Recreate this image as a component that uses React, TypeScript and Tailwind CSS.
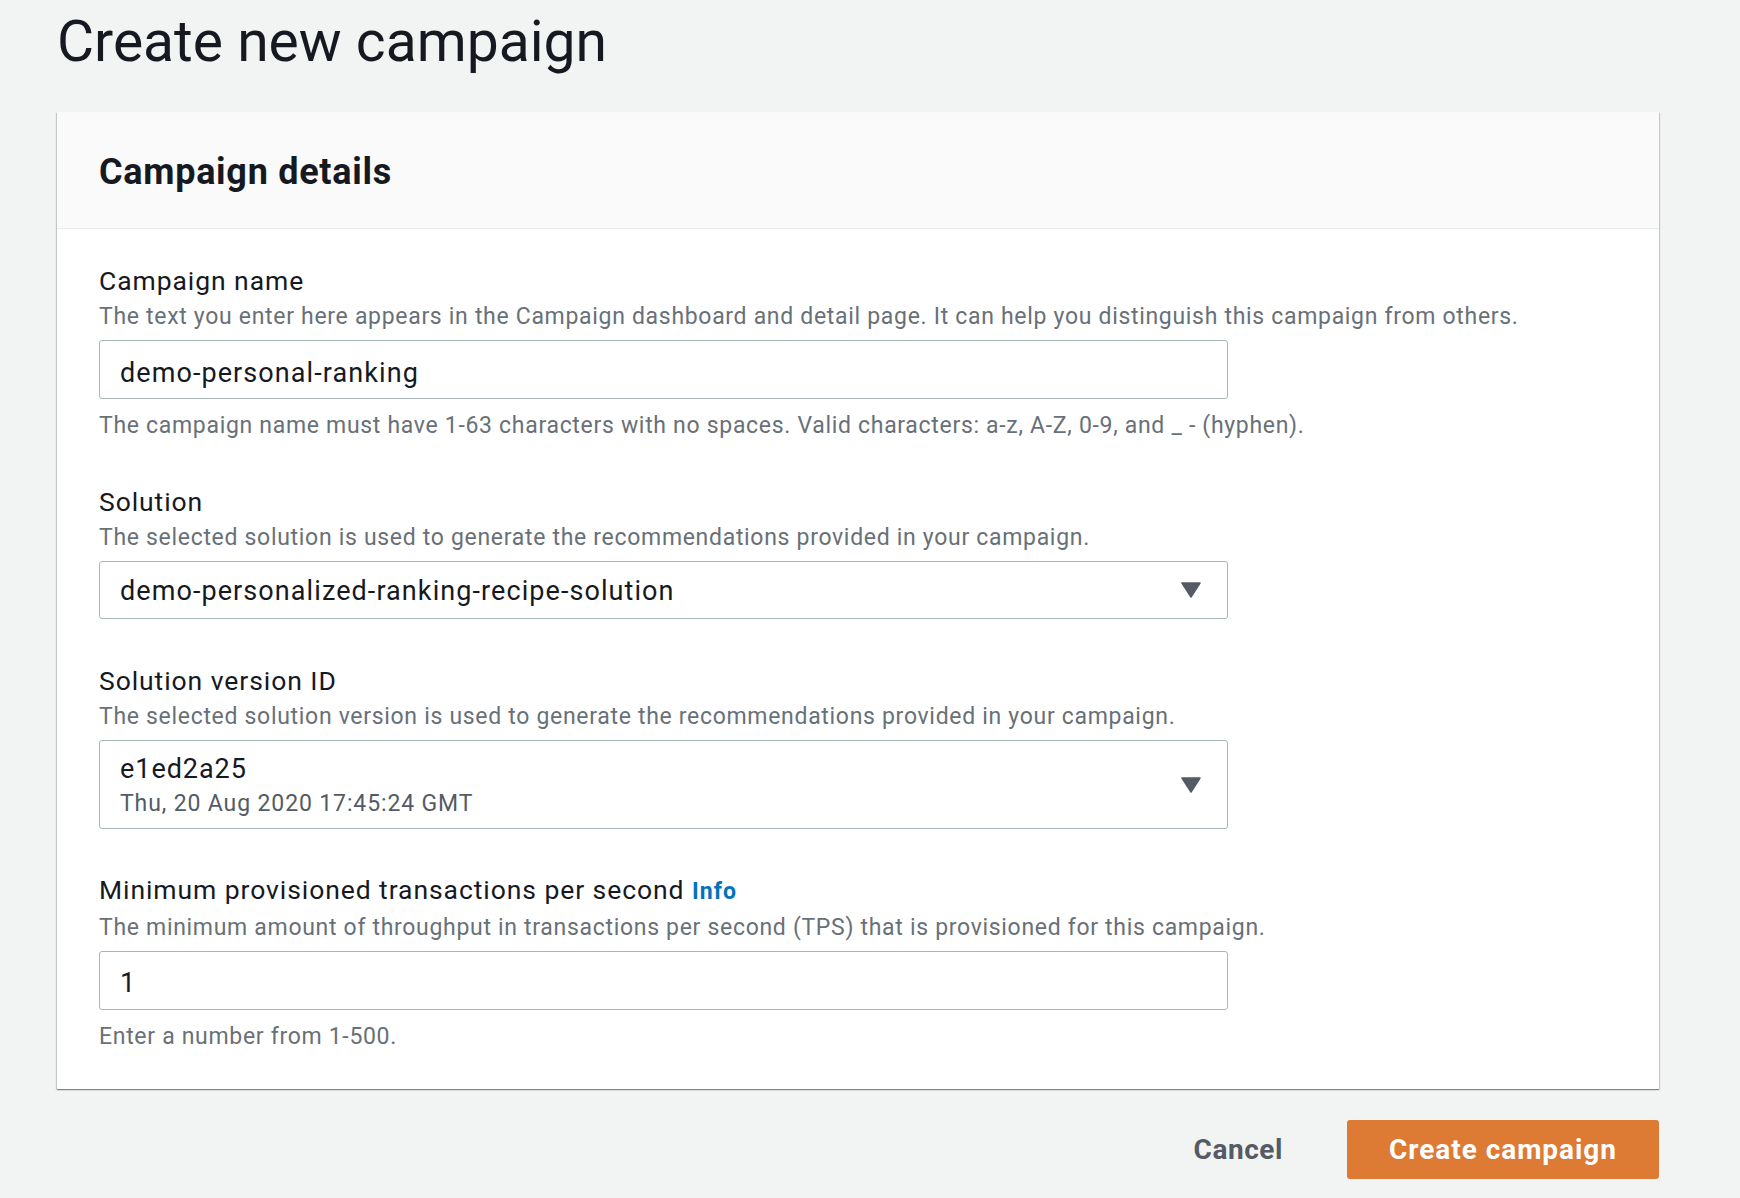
import React from 'react';

const font = { fontFamily: 'Roboto, "Open Sans", sans-serif' };

const Caret = () => (
  <svg width="20" height="16" viewBox="0 0 20 16" aria-hidden="true">
    <path d="M1 1h18l-9 14z" fill="#545b64" stroke="#545b64" strokeWidth="1.5" strokeLinejoin="round" />
  </svg>
);

interface FieldProps {
  label: React.ReactNode;
  description: string;
  hint?: string;
  children: React.ReactNode;
  className?: string;
}

const Field: React.FC<FieldProps> = ({ label, description, hint, children, className }) => (
  <div className={className}>
    <div className="text-[26.5px] leading-[32px] tracking-[0.035em] text-[#16191f]">{label}</div>
    <div className="mt-[5px] text-[23px] leading-[30px] tracking-[0.03em] text-[#687078]">{description}</div>
    <div className="mt-[8px] w-[1129px]">{children}</div>
    {hint && <div className="mt-[12px] text-[23px] leading-[30px] tracking-[0.03em] text-[#687078]">{hint}</div>}
  </div>
);

export default function App() {
  return (
    <div className="min-h-screen bg-[#f2f3f3] px-[57px]" style={font}>
      <h1 className="pt-[10px] text-[57px] leading-[64px] font-normal text-[#16191f]">Create new campaign</h1>

      <div className="mt-[38px] w-[1602px] bg-white shadow-[0_1px_1px_0_rgba(0,28,36,0.3),1px_1px_1px_0_rgba(0,28,36,0.15),-1px_1px_1px_0_rgba(0,28,36,0.15)]">
        <div className="bg-[#fafafa] border-b border-[#eaeded] px-[42px] pt-[38px] pb-[34px]">
          <h2 className="text-[36px] leading-[44px] tracking-[0.02em] font-bold text-[#16191f]">Campaign details</h2>
        </div>

        <div className="px-[42px] pt-[36px] pb-[37px]">
          <Field
            label="Campaign name"
            description="The text you enter here appears in the Campaign dashboard and detail page. It can help you distinguish this campaign from others."
            hint="The campaign name must have 1-63 characters with no spaces. Valid characters: a-z, A-Z, 0-9, and _ - (hyphen)."
          >
            <div className="h-[59px] rounded-[3px] border border-[#aab7b8] bg-white px-[20px] pt-[8px] flex items-center text-[27px] tracking-[0.04em] text-[#16191f]">
              demo-personal-ranking
            </div>
          </Field>

          <Field
            className="mt-[45px]"
            label="Solution"
            description="The selected solution is used to generate the recommendations provided in your campaign."
          >
            <div className="h-[58px] rounded-[3px] border border-[#aab7b8] bg-white pl-[20px] pr-[26px] flex items-center justify-between text-[27px] tracking-[0.04em] text-[#16191f]">
              <span className="pt-[3px]">demo-personalized-ranking-recipe-solution</span>
              <Caret />
            </div>
          </Field>

          <Field
            className="mt-[46px]"
            label="Solution version ID"
            description="The selected solution version is used to generate the recommendations provided in your campaign."
          >
            <div className="h-[89px] rounded-[3px] border border-[#aab7b8] bg-white pl-[20px] pr-[26px] flex items-center justify-between">
              <div className="flex flex-col pt-[4px]">
                <span className="text-[27px] leading-[34px] tracking-[0.035em] text-[#16191f]">e1ed2a25</span>
                <span className="text-[23px] leading-[36px] tracking-[0.038em] text-[#545b64]">Thu, 20 Aug 2020 17:45:24 GMT</span>
              </div>
              <Caret />
            </div>
          </Field>

          <Field
            className="mt-[45px]"
            label={
              <>
                Minimum provisioned transactions per second{' '}
                <a href="#" className="text-[23px] tracking-[0.045em] font-bold text-[#0073bb]">Info</a>
              </>
            }
            description="The minimum amount of throughput in transactions per second (TPS) that is provisioned for this campaign."
            hint="Enter a number from 1-500."
          >
            <div className="h-[59px] rounded-[3px] border border-[#aab7b8] bg-white px-[20px] pt-[6px] flex items-center text-[27px] tracking-[0.04em] text-[#16191f]">
              1
            </div>
          </Field>
        </div>
      </div>

      <div className="mt-[31px] w-[1602px] flex justify-end items-center gap-[46px]">
        <button className="px-[18px] h-[59px] text-[28px] tracking-[0.02em] font-bold text-[#545b64]">Cancel</button>
        <button className="w-[312px] h-[59px] rounded-[3px] bg-[#dd7a33] text-[28px] tracking-[0.034em] font-bold text-white">
          Create campaign
        </button>
      </div>
    </div>
  );
}
